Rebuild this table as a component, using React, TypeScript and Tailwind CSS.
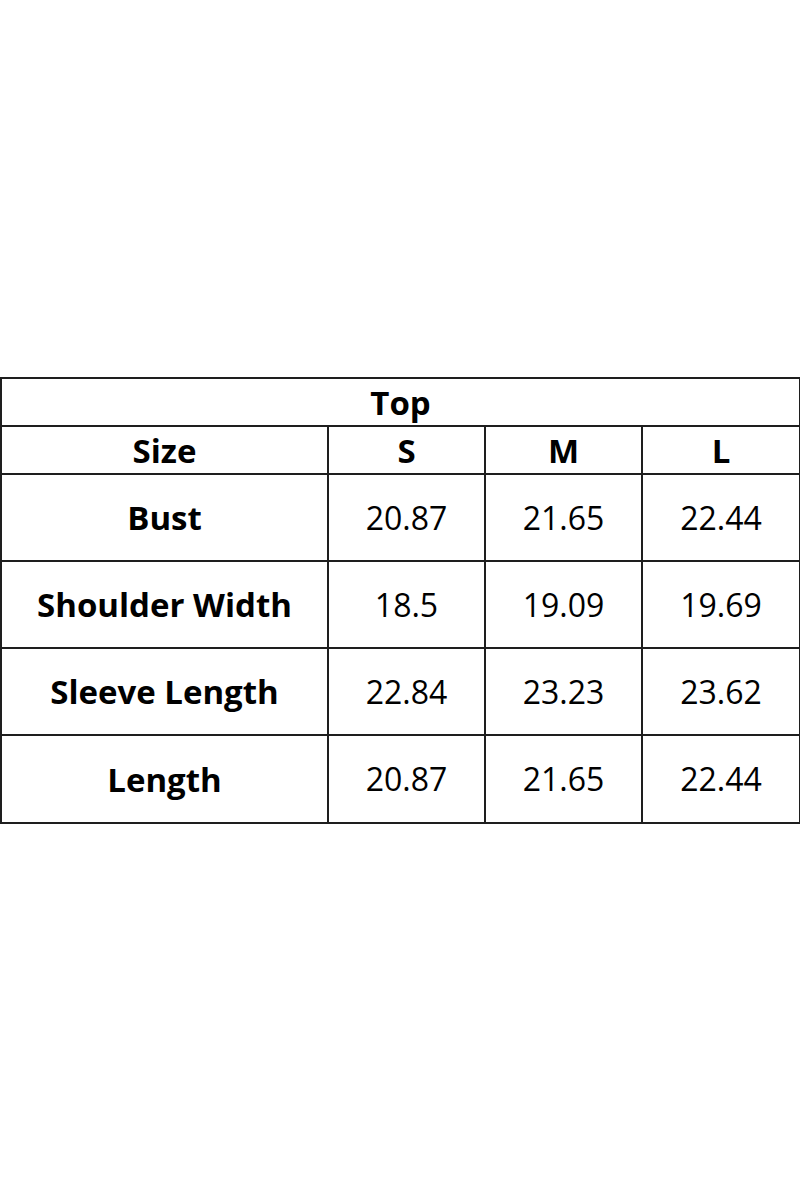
import React from "react";

const rows: [string, string, string, string][] = [
  ["Bust", "20.87", "21.65", "22.44"],
  ["Shoulder Width", "18.5", "19.09", "19.69"],
  ["Sleeve Length", "22.84", "23.23", "23.62"],
  ["Length", "20.87", "21.65", "22.44"],
];

export default function App() {
  const cell = "border-2 border-[#1e1e1e] text-center align-middle p-0";
  const bold = "font-bold text-[33px]";
  return (
    <div
      className="w-[800px] h-[1200px] bg-white pt-[377px] text-black"
      style={{ fontFamily: '"Open Sans", "Noto Sans", sans-serif' }}
    >
      <table className="w-[799px] table-fixed border-collapse text-[32px] leading-none">
        <colgroup>
          <col className="w-[327px]" />
          <col className="w-[157px]" />
          <col className="w-[157px]" />
          <col className="w-[158px]" />
        </colgroup>
        <tbody>
          <tr className="h-[48px]">
            <td colSpan={4} className={`${cell} ${bold}`}>
              Top
            </td>
          </tr>
          <tr className="h-[48px]">
            <td className={`${cell} ${bold}`}>Size</td>
            <td className={`${cell} ${bold}`}>S</td>
            <td className={`${cell} ${bold}`}>M</td>
            <td className={`${cell} ${bold}`}>L</td>
          </tr>
          {rows.map((r, i) => (
            <tr key={i} className={i === 3 ? "h-[88px]" : "h-[87px]"}>
              <td className={`${cell} ${bold}`}>{r[0]}</td>
              <td className={cell}>{r[1]}</td>
              <td className={cell}>{r[2]}</td>
              <td className={cell}>{r[3]}</td>
            </tr>
          ))}
        </tbody>
      </table>
    </div>
  );
}
